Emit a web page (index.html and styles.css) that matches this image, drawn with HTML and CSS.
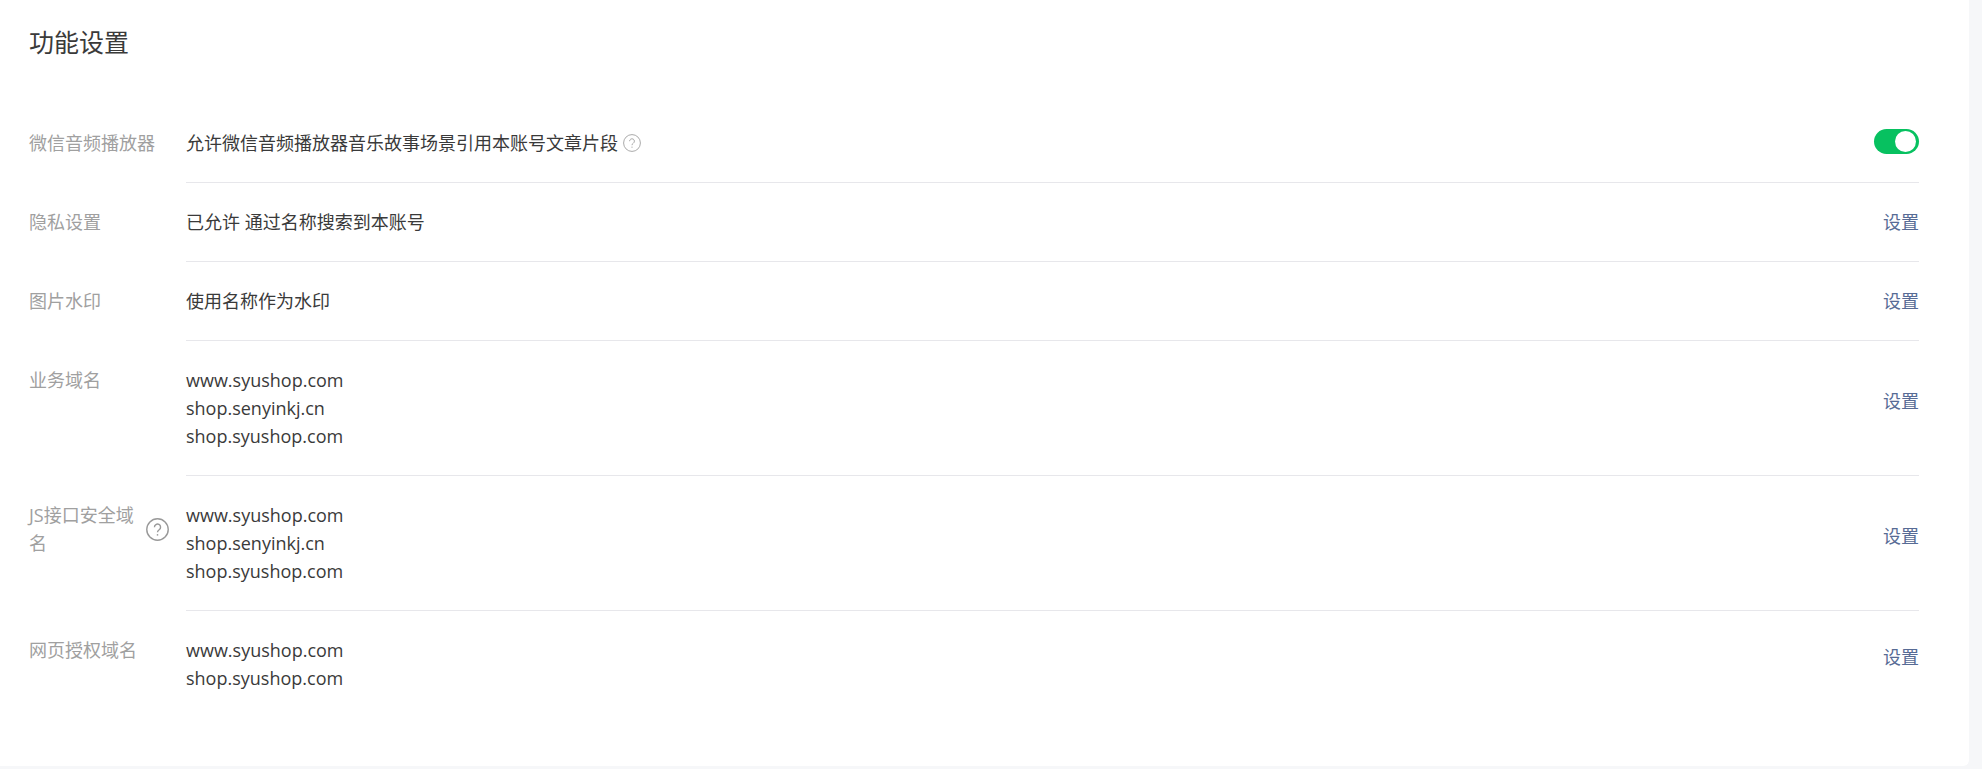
FILE: index.html
```html
<!DOCTYPE html>
<html lang="zh-CN">

<head>
    <meta charset="UTF-8">
    <title>功能设置</title>
    <link rel="stylesheet" href="styles.css">
</head>

<body>
    <div class="card">
        <h2 class="title">功能设置</h2>
        <ul class="list">
            <li class="row">
                <div class="label">微信音频播放器</div>
                <div class="body">
                    <div class="text">
                        允许微信音频播放器音乐故事场景引用本账号文章片段
                        <svg class="tip" viewBox="0 0 18 18">
                            <circle cx="9" cy="9" r="8.4"></circle>
                            <path d="M6.6 7.2a2.4 2.4 0 1 1 3.7 2c-.9.6-1.3 1-1.3 2"></path>
                            <path d="M9 12.6v1.2"></path>
                        </svg>
                    </div>
                    <span class="switch"><i></i></span>
                </div>
            </li>
            <li class="row">
                <div class="label">隐私设置</div>
                <div class="body">
                    <div class="text">已允许 通过名称搜索到本账号</div>
                    <a href="#" class="link">设置</a>
                </div>
            </li>
            <li class="row">
                <div class="label">图片水印</div>
                <div class="body">
                    <div class="text">使用名称作为水印</div>
                    <a href="#" class="link">设置</a>
                </div>
            </li>
            <li class="row multi">
                <div class="label">业务域名</div>
                <div class="body">
                    <div class="text">
                        <p>www.syushop.com</p>
                        <p>shop.senyinkj.cn</p>
                        <p>shop.syushop.com</p>
                    </div>
                    <a href="#" class="link">设置</a>
                </div>
            </li>
            <li class="row multi">
                <div class="label">
                    <span class="label-wrap">JS接口安全域名</span>
                    <svg class="tip tip-lg" viewBox="0 0 18 18">
                        <circle cx="9" cy="9" r="8.4"></circle>
                        <path d="M6.6 7.2a2.4 2.4 0 1 1 3.7 2c-.9.6-1.3 1-1.3 2"></path>
                        <path d="M9 12.6v1.2"></path>
                    </svg>
                </div>
                <div class="body">
                    <div class="text">
                        <p>www.syushop.com</p>
                        <p>shop.senyinkj.cn</p>
                        <p>shop.syushop.com</p>
                    </div>
                    <a href="#" class="link">设置</a>
                </div>
            </li>
            <li class="row multi">
                <div class="label">网页授权域名</div>
                <div class="body">
                    <div class="text">
                        <p>www.syushop.com</p>
                        <p>shop.syushop.com</p>
                    </div>
                    <a href="#" class="link">设置</a>
                </div>
            </li>
        </ul>
    </div>
</body>

</html>
```

FILE: styles.css
```css
* {
    margin: 0;
    padding: 0;
    box-sizing: border-box;
}

html,
body {
    height: 100%;
    overflow: hidden;
}

body {
    background: #f6f7f9;
    font-family: "Open Sans", "Noto Sans CJK SC", sans-serif;
    font-size: 18px;
    line-height: 28px;
    color: #3a3a3a;
}

/* 大容器 */
.card {
    width: 1969px;
    height: 766px;
    padding: 24px 50px 0 29px;
    background: #fff;
    border-radius: 0 0 6px 0;
}

.title {
    font-size: 25px;
    font-weight: 400;
    line-height: 36px;
    margin-bottom: 44px;
}

.list {
    list-style: none;
}

.row {
    display: flex;
}

.label {
    width: 157px;
    padding: 25px 0;
    color: #a0a0a0;
    display: flex;
    align-items: center;
    align-self: flex-start;
    flex-shrink: 0;
}

.label-wrap {
    width: 112px;
}

.body {
    flex: 1;
    display: flex;
    justify-content: space-between;
    align-items: center;
    padding: 25px 0;
    border-bottom: 1px solid #e7e7eb;
}

.row:last-child .body {
    border-bottom: 0;
}

/* 多行域名 设置按钮偏上一点 */
.multi .link {
    margin-bottom: 14px;
}

.text p {
    white-space: nowrap;
}

.link {
    color: #576b95;
    text-decoration: none;
}

/* 问号图标 */
.tip {
    width: 18px;
    height: 18px;
    vertical-align: -2px;
    fill: none;
    stroke: #aaa;
    stroke-width: 1;
}

.tip-lg {
    width: 23px;
    height: 23px;
    margin-left: 5px;
    flex-shrink: 0;
    stroke: #999;
    stroke-width: 1.1;
}

/* 开关 */
.switch {
    width: 45px;
    height: 25px;
    margin-bottom: 3px;
    border-radius: 13px;
    background: #07c160;
    display: flex;
    align-items: center;
    justify-content: flex-end;
    padding-right: 3px;
}

.switch i {
    width: 21px;
    height: 21px;
    border-radius: 50%;
    background: #fff;
}
```
